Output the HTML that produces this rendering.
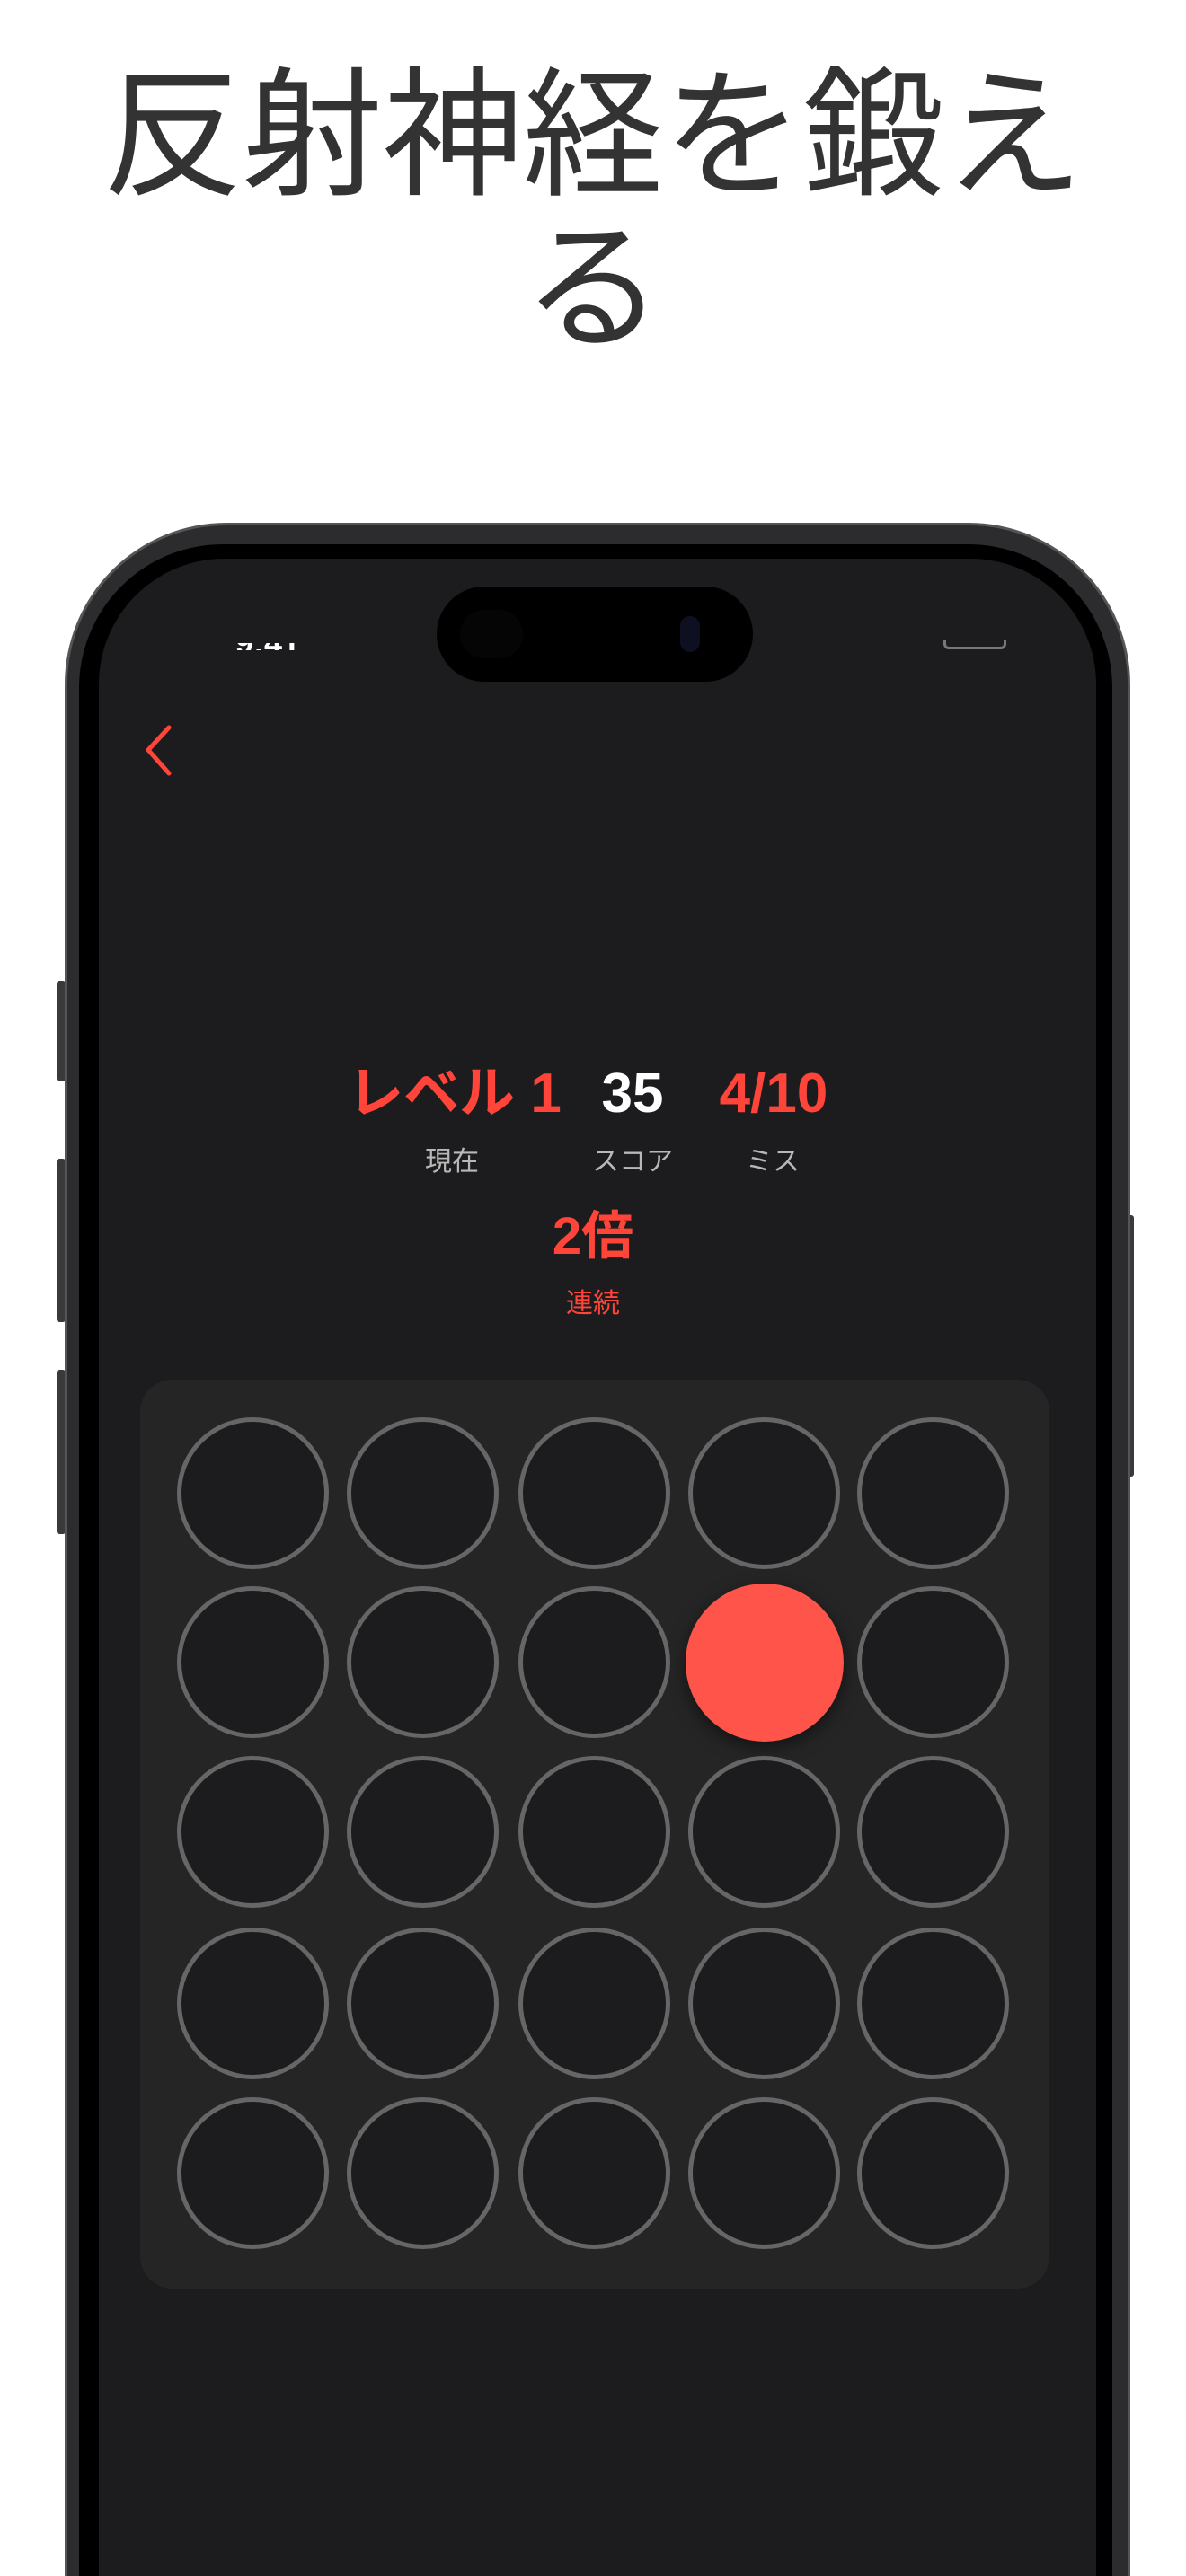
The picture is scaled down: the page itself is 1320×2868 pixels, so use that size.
<!DOCTYPE html>
<html style="height:2868px;overflow:hidden"><head><meta charset="utf-8"><style>
*{margin:0;padding:0;box-sizing:border-box}
body{width:1320px;height:2868px;background:#fff;position:relative;overflow:hidden;font-family:"Liberation Sans","Noto Sans CJK JP",sans-serif}
.t{position:absolute;left:0;width:1320px;text-align:center;color:#333;font-size:156px;line-height:165px;font-family:"Liberation Sans","Noto Sans CJK JP",sans-serif}
.phone{position:absolute;left:72px;top:582px;width:1186px;height:2400px;border-radius:180px 180px 0 0;background:#2c2c2e;border:3px solid #555;border-bottom:none}
.bezel{position:absolute;left:88px;top:606px;width:1150px;height:2400px;border-radius:160px 160px 0 0;background:#000}
.screen{position:absolute;left:110px;top:622px;width:1110px;height:2300px;border-radius:140px 140px 0 0;background:#1c1c1e}
.btn{position:absolute;background:#3a3a3c;border-radius:3px}
.island{position:absolute;left:486px;top:653px;width:352px;height:106px;border-radius:53px;background:#000}
.lbl{position:absolute;text-align:center;font-size:30px;color:#b8b8b8;width:200px}
.big{position:absolute;text-align:center;font-weight:bold;font-size:62px;width:300px;line-height:62px}
.panel{position:absolute;left:156px;top:1536px;width:1012px;height:1012px;border-radius:36px;background:#252525}
.c{position:absolute;width:169px;height:169px;border-radius:50%;border:5px solid #666;background:#1c1c1e}
</style></head><body>
<div class="t" style="top:70px">反射神経を鍛え</div>
<div class="t" style="top:240px">る</div>
<div class="btn" style="left:63px;top:1092px;width:10px;height:112px"></div>
<div class="btn" style="left:63px;top:1290px;width:10px;height:182px"></div>
<div class="btn" style="left:63px;top:1525px;width:10px;height:183px"></div>
<div class="btn" style="left:1252px;top:1353px;width:10px;height:291px"></div>
<div class="phone"></div>
<div class="bezel"></div>
<div class="screen"></div>
<div class="island"><div style="position:absolute;left:26px;top:26px;width:70px;height:54px;border-radius:27px;background:#050505"></div><div style="position:absolute;left:271px;top:33px;width:22px;height:40px;border-radius:11px;background:#0f0f22"></div></div>
<div style="position:absolute;left:262px;top:716px;width:110px;height:8px;color:#fff;overflow:hidden;font-size:36px;line-height:0;font-weight:bold">9:41</div>
<div style="position:absolute;left:1050px;top:713px;width:70px;height:10px;border-radius:0 0 6px 6px;border:3px solid #777;border-top:none"></div>
<svg style="position:absolute;left:155px;top:805px" width="40" height="62" viewBox="0 0 40 62"><path d="M33 5 L10 30 L33 56" fill="none" stroke="#ff453a" stroke-width="5" stroke-linecap="round" stroke-linejoin="round"/></svg>
<div class="big" style="left:356px;top:1187px;color:#ff453a">レベル 1</div>
<div class="big" style="left:554px;top:1187px;color:#fff">35</div>
<div class="big" style="left:711px;top:1187px;color:#ff453a">4/10</div>
<div class="lbl" style="left:403px;top:1268px">現在</div>
<div class="lbl" style="left:604px;top:1268px">スコア</div>
<div class="lbl" style="left:760px;top:1268px">ミス</div>
<div class="big" style="left:510px;top:1346px;color:#ff453a;font-size:58px">2倍</div>
<div class="lbl" style="left:560px;top:1426px;color:#ff453a">連続</div>
<div class="panel"></div>
<div id="g"></div>
<script>
var xs=[282,471,662,851,1039],ys=[1663,1851,2040,2231,2420],h='';
for(var r=0;r<5;r++)for(var c=0;c<5;c++){
if(r==1&&c==3){h+='<div style="position:absolute;left:'+(xs[c]-88)+'px;top:'+(ys[r]-88)+'px;width:176px;height:176px;border-radius:50%;background:#ff5449;box-shadow:0 6px 18px rgba(0,0,0,.5)"></div>';}
else h+='<div class="c" style="left:'+(xs[c]-85)+'px;top:'+(ys[r]-85)+'px"></div>';}
document.getElementById('g').innerHTML=h;
</script>
</body></html>
